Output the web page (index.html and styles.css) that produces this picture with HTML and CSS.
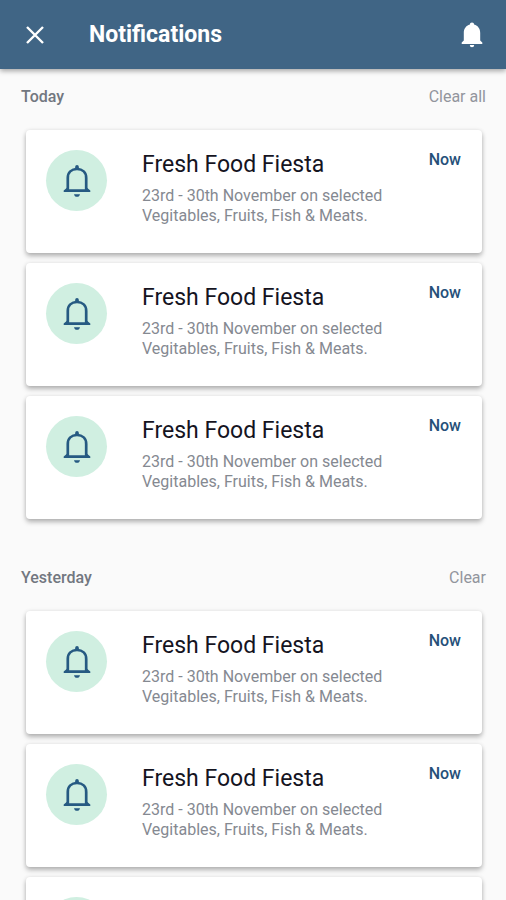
FILE: index.html
```html
<!DOCTYPE html>
<html lang="en">
<head>
<meta charset="utf-8">
<meta name="viewport" content="width=device-width, initial-scale=1">
<title>Notifications</title>
<link rel="stylesheet" href="styles.css">
</head>
<body>
<svg class="defs" aria-hidden="true">
  <symbol id="bell" viewBox="0 0 28 34">
    <path d="M4.800 26V14C4.800 8.500 8.500 5 14 5S23.200 8.500 23.200 14V26" fill="none" stroke="currentColor" stroke-width="2.700"/>
    <path d="M4 23.800h2v1.400h16v-1.400h2l3.300 2.800v1.400H.7v-1.400z" fill="currentColor"/>
    <path d="M11 5.400L12.200 3.500V2.700a1.800 1.800 0 0 1 3.600 0v.8L17 5.400zM11 30.200h6c-.3 1.700-1.400 2.600-3 2.600s-2.700-.9-3-2.600z" fill="currentColor"/>
  </symbol>
</svg>
<div class="screen">
  <header class="bar">
    <button class="icon-button" type="button" aria-label="Close">
      <svg class="close" viewBox="0 0 18 18"><path d="M1 1L17 17M17 1L1 17"/></svg>
    </button>
    <h1 class="bar-title">Notifications</h1>
    <button class="icon-button" type="button" aria-label="Notification settings">
      <svg class="bar-bell" viewBox="0 0 22 26"><path d="M11 0.500c1.300 0 2.100.8 2.100 1.900 4 1.200 6.100 4.300 6.100 8.600v7.500l2.100 2V22H.7v-1.500l2.100-2V11c0-4.300 2.100-7.400 6.100-8.600 0-1.100.8-1.900 2.100-1.900zM8.800 23h4.400a2.200 2.300 0 0 1-4.400 0z"/></svg>
    </button>
  </header>
  <main class="content">
    <section class="group">
      <div class="group-head">
        <h2 class="group-title">Today</h2>
        <button class="clear" type="button">Clear all</button>
      </div>
      <div class="cards">
        <article class="card">
          <span class="badge"><svg class="bell"><use href="#bell"/></svg></span>
          <div class="text">
            <h3 class="card-title">Fresh Food Fiesta</h3>
            <p class="desc">23rd - 30th November on selected Vegitables, Fruits, Fish &amp; Meats.</p>
          </div>
          <time class="time">Now</time>
        </article>
        <article class="card">
          <span class="badge"><svg class="bell"><use href="#bell"/></svg></span>
          <div class="text">
            <h3 class="card-title">Fresh Food Fiesta</h3>
            <p class="desc">23rd - 30th November on selected Vegitables, Fruits, Fish &amp; Meats.</p>
          </div>
          <time class="time">Now</time>
        </article>
        <article class="card">
          <span class="badge"><svg class="bell"><use href="#bell"/></svg></span>
          <div class="text">
            <h3 class="card-title">Fresh Food Fiesta</h3>
            <p class="desc">23rd - 30th November on selected Vegitables, Fruits, Fish &amp; Meats.</p>
          </div>
          <time class="time">Now</time>
        </article>
      </div>
    </section>
    <section class="group">
      <div class="group-head">
        <h2 class="group-title">Yesterday</h2>
        <button class="clear" type="button">Clear</button>
      </div>
      <div class="cards">
        <article class="card">
          <span class="badge"><svg class="bell"><use href="#bell"/></svg></span>
          <div class="text">
            <h3 class="card-title">Fresh Food Fiesta</h3>
            <p class="desc">23rd - 30th November on selected Vegitables, Fruits, Fish &amp; Meats.</p>
          </div>
          <time class="time">Now</time>
        </article>
        <article class="card">
          <span class="badge"><svg class="bell"><use href="#bell"/></svg></span>
          <div class="text">
            <h3 class="card-title">Fresh Food Fiesta</h3>
            <p class="desc">23rd - 30th November on selected Vegitables, Fruits, Fish &amp; Meats.</p>
          </div>
          <time class="time">Now</time>
        </article>
        <article class="card">
          <span class="badge"><svg class="bell"><use href="#bell"/></svg></span>
          <div class="text">
            <h3 class="card-title">Fresh Food Fiesta</h3>
            <p class="desc">23rd - 30th November on selected Vegitables, Fruits, Fish &amp; Meats.</p>
          </div>
          <time class="time">Now</time>
        </article>
      </div>
    </section>
  </main>
</div>
</body>
</html>
```
FILE: styles.css
```css
* {
  box-sizing: border-box;
}

body,
h1,
h2,
h3,
p {
  margin: 0;
}

body {
  font-family: Roboto, "Liberation Sans", sans-serif;
  background: #fafafa;
}

button {
  padding: 0;
  border: 0;
  background: none;
  font: inherit;
  color: inherit;
  cursor: pointer;
}

.defs {
  position: absolute;
  width: 0;
  height: 0;
}

.screen {
  height: 100vh;
  display: flex;
  flex-direction: column;
}

.bar {
  flex: none;
  display: flex;
  align-items: center;
  height: 69px;
  padding: 0 19px 0 20px;
  background: #406585;
  color: #fff;
  box-shadow: 0 2px 5px rgba(0, 0, 0, 0.35);
  z-index: 1;
}

.icon-button {
  display: grid;
  place-items: center;
  width: 30px;
  height: 40px;
}

.close {
  width: 18px;
  height: 18px;
  fill: none;
  stroke: currentColor;
  stroke-width: 2.4;
}

.bar-bell {
  width: 22px;
  height: 26px;
  fill: currentColor;
}

.bar-title {
  flex: 1;
  margin-left: 39px;
  font-size: 23px;
  line-height: 30px;
  font-weight: 700;
}

.content {
  flex: 1;
  overflow: auto;
  scrollbar-width: none;
}

.group {
  padding: 16px 24px 0 26px;
}

.group + .group {
  padding-top: 47px;
}

.group-head {
  display: flex;
  justify-content: space-between;
  align-items: center;
  margin: 0 -4px 21px -5px;
  font-size: 16px;
  line-height: 24px;
}

.group-title {
  font-size: 16px;
  font-weight: 500;
  color: #727780;
}

.clear {
  color: #92959d;
}

.cards {
  display: grid;
  gap: 10px;
}

.card {
  display: flex;
  align-items: flex-start;
  padding: 20px 21px 27px 20px;
  border-radius: 4px;
  background: #fff;
  box-shadow: 0 3px 5px rgba(0, 0, 0, 0.28), 0 0 4px rgba(0, 0, 0, 0.08);
}

.badge {
  flex: none;
  display: grid;
  place-items: center;
  width: 61px;
  height: 61px;
  margin-right: 35px;
  border-radius: 50%;
  background: #d0efe1;
}

.bell {
  width: 28px;
  height: 34px;
  color: #265a82;
}

.text {
  flex: 1;
}

.card-title {
  margin-bottom: 6px;
  font-size: 23px;
  line-height: 30px;
  font-weight: 400;
  color: #15141f;
}

.desc {
  max-width: 260px;
  font-size: 16px;
  line-height: 20px;
  color: #858991;
}

.time {
  font-size: 16px;
  line-height: 20px;
  font-weight: 500;
  color: #265079;
}
```
